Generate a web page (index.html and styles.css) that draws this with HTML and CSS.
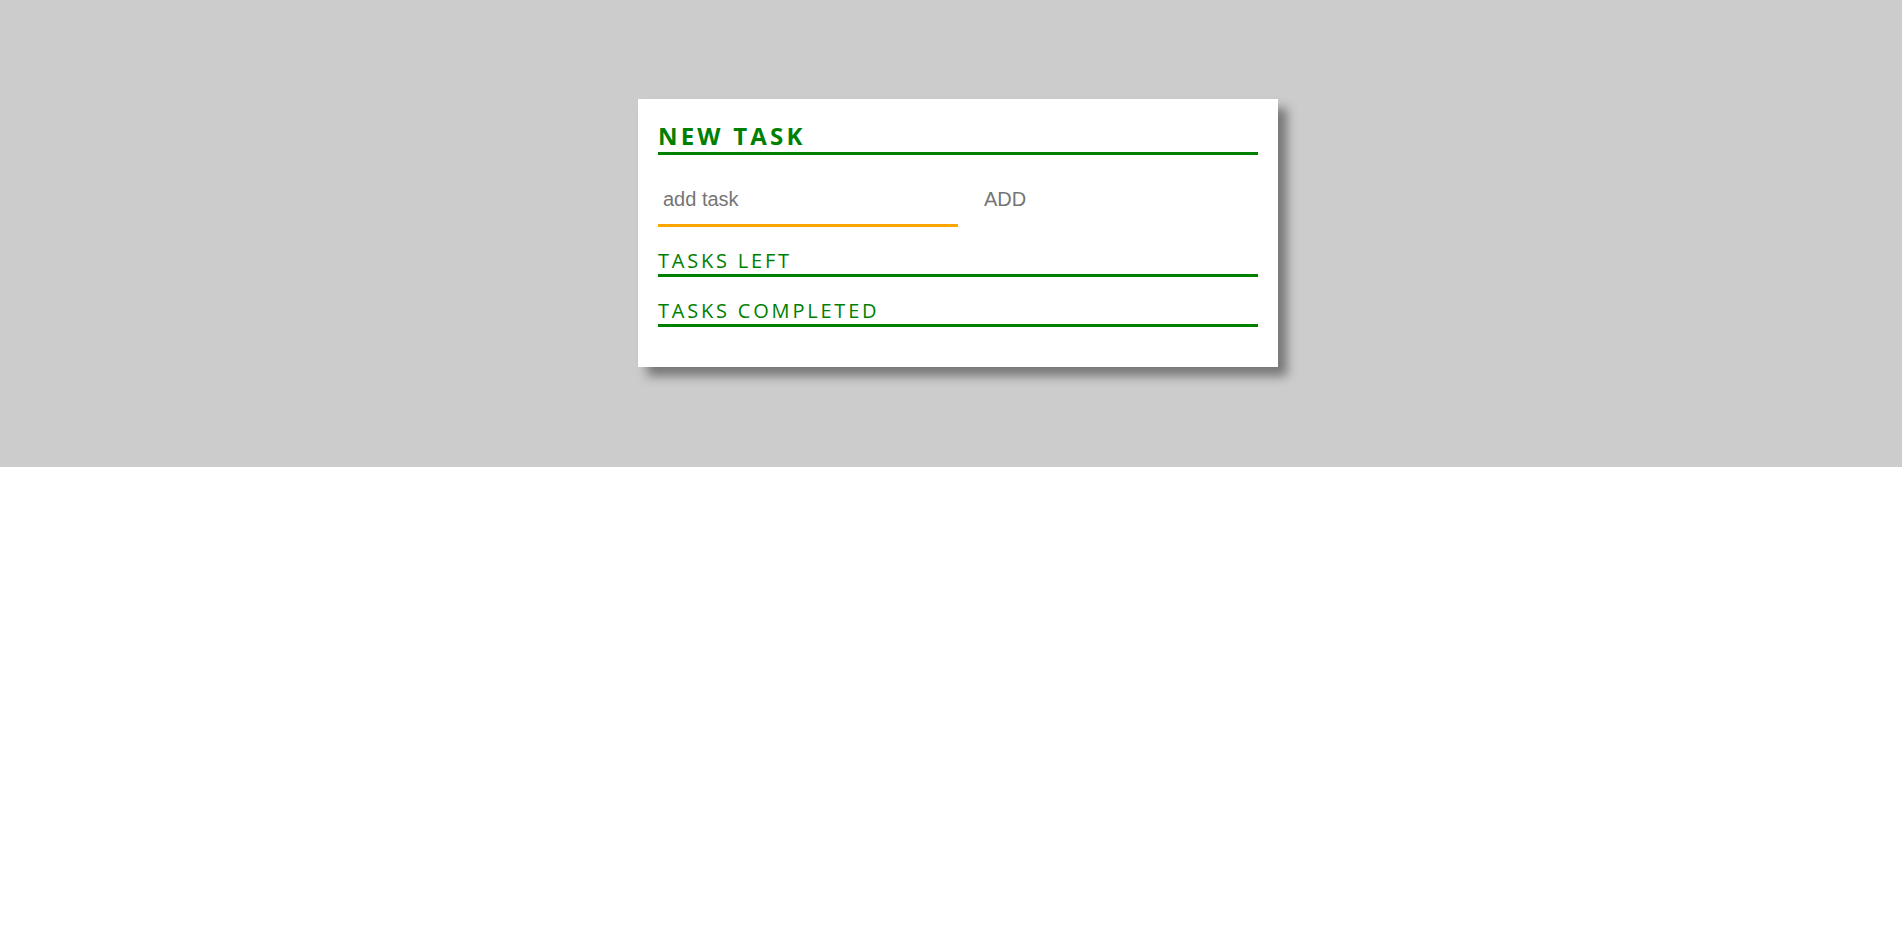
FILE: index.html
```html
<!DOCTYPE html>
<html lang="en">
<head>
<meta charset="utf-8">
<title>Todo</title>
<link rel="stylesheet" href="styles.css">
</head>
<body>
  <section class="stage">
    <div class="card">
      <h2 class="card-title">NEW TASK</h2>
      <div class="add-row">
        <input class="task-input" type="text" placeholder="add task">
        <button class="add-btn" type="button">ADD</button>
      </div>
      <h3 class="list-title">TASKS LEFT</h3>
      <ul class="task-list"></ul>
      <h3 class="list-title">TASKS COMPLETED</h3>
      <ul class="task-list"></ul>
    </div>
  </section>
</body>
</html>
```

FILE: styles.css
```css
html, body {
  margin: 0;
  padding: 0;
  background: #ffffff;
}

.stage {
  background: #cbcccb;
  padding: 99px 0 100px 14px;
  display: flex;
  justify-content: center;
}

.card {
  width: 600px;
  background: #ffffff;
  padding: 20px 20px 40px;
  box-shadow: 9px 9px 10px rgba(0, 0, 0, 0.42);
  font-family: "Open Sans", "Noto Sans", sans-serif;
}

.card-title {
  margin: 0;
  font-size: 24px;
  font-weight: 700;
  letter-spacing: 3.2px;
  color: #008000;
  border-bottom: 3px solid #008000;
  line-height: normal;
}

.add-row {
  display: flex;
  align-items: stretch;
  margin-top: 20px;
}

.task-input {
  box-sizing: border-box;
  width: 300px;
  height: 52px;
  margin: 0;
  padding: 0 5px;
  border: none;
  border-bottom: 3px solid #ffa500;
  outline: none;
  font-family: "Liberation Sans", Arial, sans-serif;
  font-size: 20px;
  color: #333;
  background: transparent;
}

.task-input::placeholder {
  color: #757575;
  opacity: 1;
}

.add-btn {
  height: 49px;
  margin: 0 0 0 10px;
  padding: 0 16px;
  border: none;
  background: transparent;
  font-family: "Liberation Sans", Arial, sans-serif;
  font-size: 20px;
  color: #757575;
  cursor: pointer;
}

.list-title {
  margin: 20px 0 0;
  font-size: 20px;
  font-weight: 400;
  line-height: 27px;
  letter-spacing: 2.8px;
  color: #008000;
  border-bottom: 3px solid #008000;
}

.task-list {
  list-style: none;
  margin: 0;
  padding: 0;
}
```
